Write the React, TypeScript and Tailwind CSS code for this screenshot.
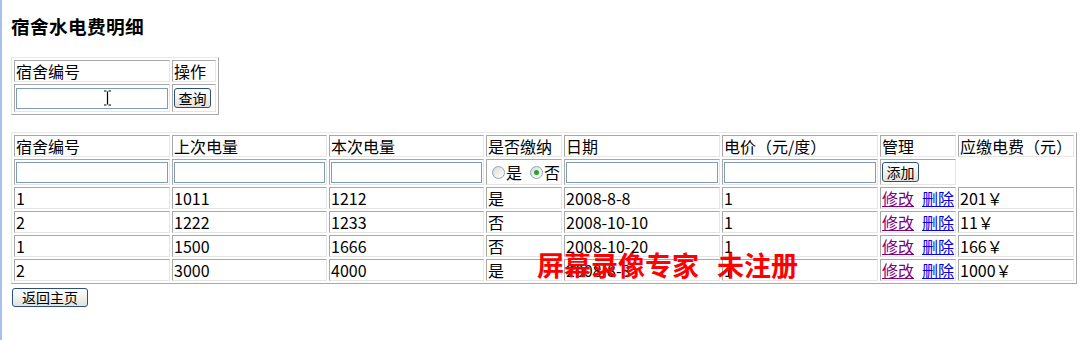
import React from 'react';

const rows = [
  { no: '1', last: '1011', cur: '1212', paid: '是', date: '2008-8-8', price: '1', fee: '201￥' },
  { no: '2', last: '1222', cur: '1233', paid: '否', date: '2008-10-10', price: '1', fee: '11￥' },
  { no: '1', last: '1500', cur: '1666', paid: '否', date: '2008-10-20', price: '1', fee: '166￥' },
  { no: '2', last: '3000', cur: '4000', paid: '是', date: '2008-8-8', price: '1', fee: '1000￥' },
];

// inset cell border, like an old border=1 table
const cell =
  'border border-t-[#a8a8a8] border-l-[#a8a8a8] border-b-[#e6e6e6] border-r-[#e6e6e6] px-px py-0 text-left font-normal align-middle';

const input = 'block w-full h-[21px] border border-[#7f9db9] bg-white outline-none';

function XpButton({ label, className = '' }: { label: string; className?: string }) {
  return (
    <button
      className={`rounded-[3px] border border-[#2d4f7c] bg-gradient-to-b from-white to-[#e3e3db] text-black leading-none ${className}`}
    >
      {label}
    </button>
  );
}

function Radio({ checked }: { checked?: boolean }) {
  return (
    <span className="inline-flex w-[13px] h-[13px] rounded-full border border-[#8ea4bd] bg-gradient-to-br from-[#dcdcd4] to-white items-center justify-center align-[-1px]">
      {checked && <span className="w-[5px] h-[5px] rounded-full bg-[#2aa12a]" />}
    </span>
  );
}

export default function App() {
  return (
    <div
      className="relative w-[1085px] h-[340px] bg-white border-l-2 border-[#a9c1ea] pl-[9px] pt-[14px] text-black overflow-hidden"
      style={{ fontFamily: '"Noto Sans CJK SC", sans-serif' }}
    >
      <h3 className="text-[18.7px] font-bold leading-[24px] tracking-[0.3px]">宿舍水电费明细</h3>

      {/* search */}
      <table className="mt-[19px] border-separate border-spacing-[2px] border border-t-[#e8e8e8] border-l-[#e8e8e8] border-b-[#a8a8a8] border-r-[#a8a8a8] text-[16px] leading-[18px]">
        <tbody>
          <tr>
            <td className={`${cell} w-[156px] h-[22px]`}>宿舍编号</td>
            <td className={`${cell} w-[44px]`}>操作</td>
          </tr>
          <tr>
            <td className={`${cell} h-[28px] px-[2px]`}>
              <div className="relative">
                <input className={input} />
                <svg className="absolute left-[87px] top-[2px]" width="9" height="16" viewBox="0 0 9 16">
                  <path d="M1 1h2.5M5.5 1H8M4.5 1.5v13M1 15h2.5M5.5 15H8" stroke="#000" strokeWidth="1.2" fill="none" />
                </svg>
              </div>
            </td>
            <td className={`${cell} px-[2px]`}>
              <XpButton label="查询" className="w-[37px] h-[20px] text-[14px]" />
            </td>
          </tr>
        </tbody>
      </table>

      {/* detail table */}
      <table className="mt-[17px] w-[1066px] border-separate border-spacing-[2px] border border-t-[#e8e8e8] border-l-[#e8e8e8] border-b-[#a8a8a8] border-r-[#a8a8a8] text-[16px] leading-[18px]">
        <tbody>
          <tr>
            <td className={`${cell} w-[156px] h-[22px]`}>宿舍编号</td>
            <td className={`${cell} w-[155px]`}>上次电量</td>
            <td className={`${cell} w-[155px]`}>本次电量</td>
            <td className={`${cell} w-[76px]`}>是否缴纳</td>
            <td className={`${cell} w-[156px]`}>日期</td>
            <td className={`${cell} w-[156px]`}>电价（元/度）</td>
            <td className={`${cell} w-[76px]`}>管理</td>
            <td className={`${cell}`}>应缴电费（元）</td>
          </tr>
          <tr>
            <td className={`${cell} h-[26px] px-[1px]`}><input className={input} /></td>
            <td className={`${cell} px-[1px]`}><input className={input} /></td>
            <td className={`${cell} px-[1px]`}><input className={input} /></td>
            <td className={`${cell} pl-[5px]`}>
              <span className="inline-flex items-center gap-[1px]">
                <Radio />
                <span>是</span>
                <span className="w-[6px]" />
                <Radio checked />
                <span>否</span>
              </span>
            </td>
            <td className={`${cell} px-[1px]`}><input className={input} /></td>
            <td className={`${cell} px-[1px]`}><input className={input} /></td>
            <td className={`${cell} px-[2px]`}>
              <XpButton label="添加" className="w-[37px] h-[20px] text-[14px]" />
            </td>
            <td className="p-0" />
          </tr>
          {rows.map((r, i) => (
            <tr key={i}>
              <td className={`${cell} h-[22px]`}>{r.no}</td>
              <td className={cell}>{r.last}</td>
              <td className={cell}>{r.cur}</td>
              <td className={cell}>{r.paid}</td>
              <td className={cell}>{r.date}</td>
              <td className={cell}>{r.price}</td>
              <td className={`${cell} whitespace-nowrap`}>
                <a className="text-[#800080] underline">修改</a>
                <span className="inline-block w-[8px]" />
                <a className="text-[#0000ee] underline">删除</a>
              </td>
              <td className={cell}>{r.fee}</td>
            </tr>
          ))}
        </tbody>
      </table>

      <XpButton label="返回主页" className="mt-[1px] ml-[1px] w-[76px] h-[19px] text-[14px]" />

      {/* recorder watermark */}
      <div className="absolute left-[535px] top-[249px] flex gap-[18px] text-[27px] font-bold leading-[32px] text-[#ff0000]">
        <span>屏幕录像专家</span>
        <span>未注册</span>
      </div>
    </div>
  );
}
